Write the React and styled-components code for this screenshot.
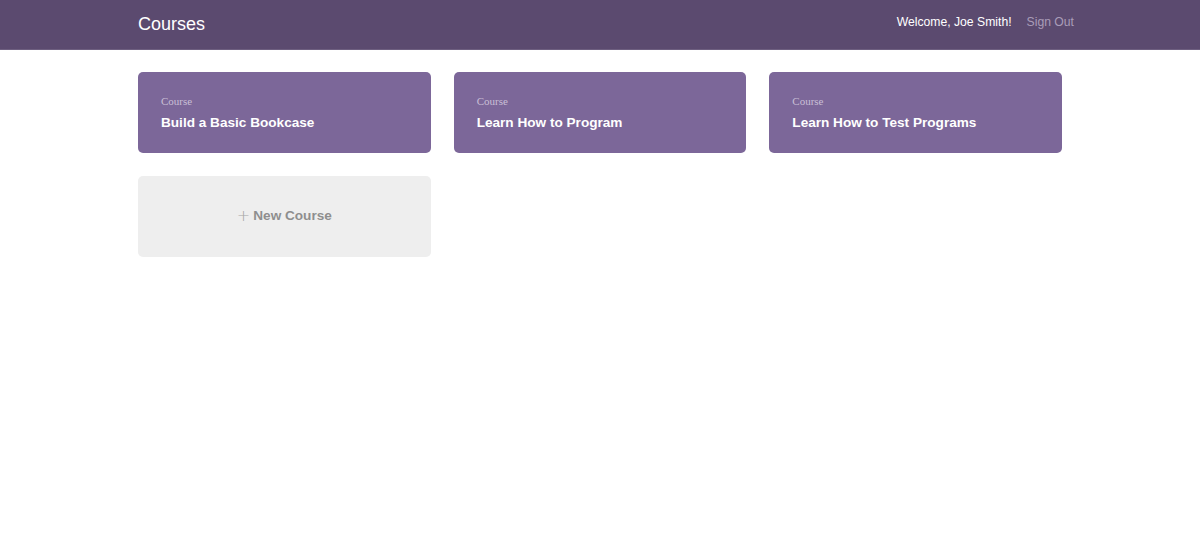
import styled, { createGlobalStyle } from 'styled-components';

const GlobalStyle = createGlobalStyle`
  body {
    margin: 0;
    background: #ffffff;
    font-family: "Liberation Sans", Arial, sans-serif;
  }
`

const courses = [
    { id: 1, title: "Build a Basic Bookcase" },
    { id: 2, title: "Learn How to Program" },
    { id: 3, title: "Learn How to Test Programs" },
]

export default function App() {
    return (
        <>
            <GlobalStyle />
            <Header>
                <HeaderInner>
                    <Logo>Courses</Logo>
                    <Nav>
                        <Welcome>Welcome, Joe Smith!</Welcome>
                        <SignOut href="#">Sign Out</SignOut>
                    </Nav>
                </HeaderInner>
            </Header>
            <Grid>
                {courses.map(course => (
                    <CourseCard key={course.id} href="#">
                        <Label>Course</Label>
                        <CourseTitle>{course.title}</CourseTitle>
                    </CourseCard>
                ))}
                <NewCourse href="#">
                    <Plus>+</Plus> New Course
                </NewCourse>
            </Grid>
        </>
    )
}

const Header = styled.header`
    background-color: #5b4a6f;
    height: 50px;
    border-bottom: 1px solid #6e5f80;
    box-sizing: border-box;
`
const HeaderInner = styled.div`
    width: 924px;
    height: 100%;
    margin: 0 auto;
    display: flex;
    align-items: center;
    justify-content: space-between;
`
const Logo = styled.h1`
    margin: 0;
    font-size: 18px;
    font-weight: 400;
    color: #ffffff;
`
const Nav = styled.nav`
    display: flex;
    align-items: center;
    gap: 15px;
    margin-right: -12px;
    padding-bottom: 6px;
    font-size: 12.2px;
`
const Welcome = styled.span`
    color: #ffffff;
`
const SignOut = styled.a`
    color: #a99cb8;
    text-decoration: none;
`
const Grid = styled.main`
    width: 924px;
    margin: 22px auto 0;
    display: grid;
    grid-template-columns: repeat(3, 1fr);
    column-gap: 23px;
    row-gap: 23px;
`
const CourseCard = styled.a`
    display: block;
    height: 81px;
    box-sizing: border-box;
    padding: 23px 23px 0;
    background-color: #7c6799;
    border-radius: 5px;
    text-decoration: none;
`
const Label = styled.div`
    font-family: "Liberation Serif", "Times New Roman", serif;
    font-size: 11px;
    color: #c9bfd6;
    margin-bottom: 8px;
`
const CourseTitle = styled.h3`
    margin: 0;
    font-size: 13.6px;
    font-weight: 700;
    color: #ffffff;
`
const NewCourse = styled.a`
    display: flex;
    align-items: center;
    justify-content: center;
    height: 81px;
    background-color: #eeeeee;
    border-radius: 5px;
    text-decoration: none;
    font-size: 13.6px;
    font-weight: 700;
    color: #8e8e8e;
    gap: 3px;
    padding-bottom: 2px;
    box-sizing: border-box;
`
const Plus = styled.span`
    font-size: 16px;
    color: #a6a6a6;
    font-family: "DejaVu Sans", sans-serif;
    font-weight: 200;
`
